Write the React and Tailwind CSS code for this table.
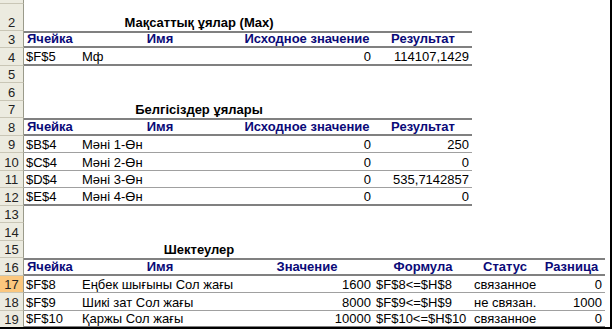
import React from "react";

const T1_COLS = ["w-[56px]", "w-[160px]", "w-[134px]", "w-[98px]"];
const T3_COLS = ["w-[56px]", "w-[160px]", "w-[134px]", "w-[98px]", "w-[66px]", "w-[67px]"];

const RowHead = ({ n, active }) => (
  <div
    className={`w-[24px] shrink-0 flex items-end justify-center border-r border-b border-r-[#9a9a8a] border-b-[#c9c6b6] text-[13px] leading-[13px] pb-[1px] text-[#222] ${
      active ? "bg-[#fbc77e]" : "bg-[#ecebe0]"
    }`}
  >
    {n}
  </div>
);

const Row = ({ n, tall, active, children }) => (
  <div className={`flex ${tall ? "h-[27px]" : "h-[17.5px]"}`}>
    <RowHead n={n} active={active} />
    <div className="flex flex-1 min-w-0">{children}</div>
  </div>
);

const Title = ({ text }) => (
  <div className="w-[350px] flex items-end justify-center font-bold text-[13px] leading-[13px] pb-[2px] text-black">
    {text}
  </div>
);

const HeaderRow = ({ cols, labels }) => (
  <div className="flex border-y-2 border-[#808080]">
    {labels.map((l, i) => (
      <div
        key={i}
        className={`${cols[i]} flex items-end ${
          i === 0 ? "justify-start pl-[3px]" : "justify-center"
        } font-bold text-[13px] leading-[13px] pb-[1px] text-[#0a0a78] whitespace-nowrap`}
      >
        {l}
      </div>
    ))}
  </div>
);

const DataRow = ({ cols, values, aligns, last }) => (
  <div
    className={`flex ${
      last ? "border-b-2 border-[#808080]" : "border-b border-[#a0a0a0]"
    }`}
  >
    {values.map((v, i) => (
      <div
        key={i}
        className={`${cols[i]} flex items-end ${
          aligns[i] === "r" ? "justify-end pr-[3px]" : "justify-start pl-[2px]"
        } text-[13px] leading-[13px] pb-[1px] text-black whitespace-nowrap`}
      >
        {v}
      </div>
    ))}
  </div>
);

const vars = [
  ["$B$4", "Мәні 1-Өн", "0", "250"],
  ["$C$4", "Мәні 2-Өн", "0", "0"],
  ["$D$4", "Мәні 3-Өн", "0", "535,7142857"],
  ["$E$4", "Мәні 4-Өн", "0", "0"],
];

const limits = [
  ["$F$8", "Еңбек шығыны Сол жағы", "1600", "$F$8<=$H$8", "связанное", "0"],
  ["$F$9", "Шикі зат Сол жағы", "8000", "$F$9<=$H$9", "не связан.", "1000"],
  ["$F$10", "Қаржы Сол жағы", "10000", "$F$10<=$H$10", "связанное", "0"],
];

export default function App() {
  const t1Labels = ["Ячейка", "Имя", "Исходное значение", "Результат"];

  return (
    <div className="w-[613px] h-[331px] overflow-hidden bg-white font-['Liberation_Sans',Arial,sans-serif]">
      <div className="w-[612px] h-[329px] border-r-2 border-b-2 border-black overflow-hidden">
        <div className="flex flex-col mt-[-14px]">
          <Row n={1} />
          <Row n={2} tall>
            <Title text="Мақсаттық ұялар (Max)" />
          </Row>
          <Row n={3}>
            <HeaderRow cols={T1_COLS} labels={t1Labels} />
          </Row>
          <Row n={4}>
            <DataRow cols={T1_COLS} values={["$F$5", "Мф", "0", "114107,1429"]} aligns={["l", "l", "r", "r"]} last />
          </Row>
          <Row n={5} />
          <Row n={6} />
          <Row n={7}>
            <Title text="Белгісіздер ұялары" />
          </Row>
          <Row n={8}>
            <HeaderRow cols={T1_COLS} labels={t1Labels} />
          </Row>
          {vars.map((v, i) => (
            <Row key={i} n={9 + i}>
              <DataRow cols={T1_COLS} values={v} aligns={["l", "l", "r", "r"]} last={i === vars.length - 1} />
            </Row>
          ))}
          <Row n={13} />
          <Row n={14} />
          <Row n={15}>
            <Title text="Шектеулер" />
          </Row>
          <Row n={16}>
            <HeaderRow cols={T3_COLS} labels={["Ячейка", "Имя", "Значение", "Формула", "Статус", "Разница"]} />
          </Row>
          {limits.map((v, i) => (
            <Row key={i} n={17 + i} active={i === 0}>
              <DataRow
                cols={T3_COLS}
                values={v}
                aligns={["l", "l", "r", "l", "l", "r"]}
                last={i === limits.length - 1}
              />
            </Row>
          ))}
          <Row n={null} />
        </div>
      </div>
    </div>
  );
}
